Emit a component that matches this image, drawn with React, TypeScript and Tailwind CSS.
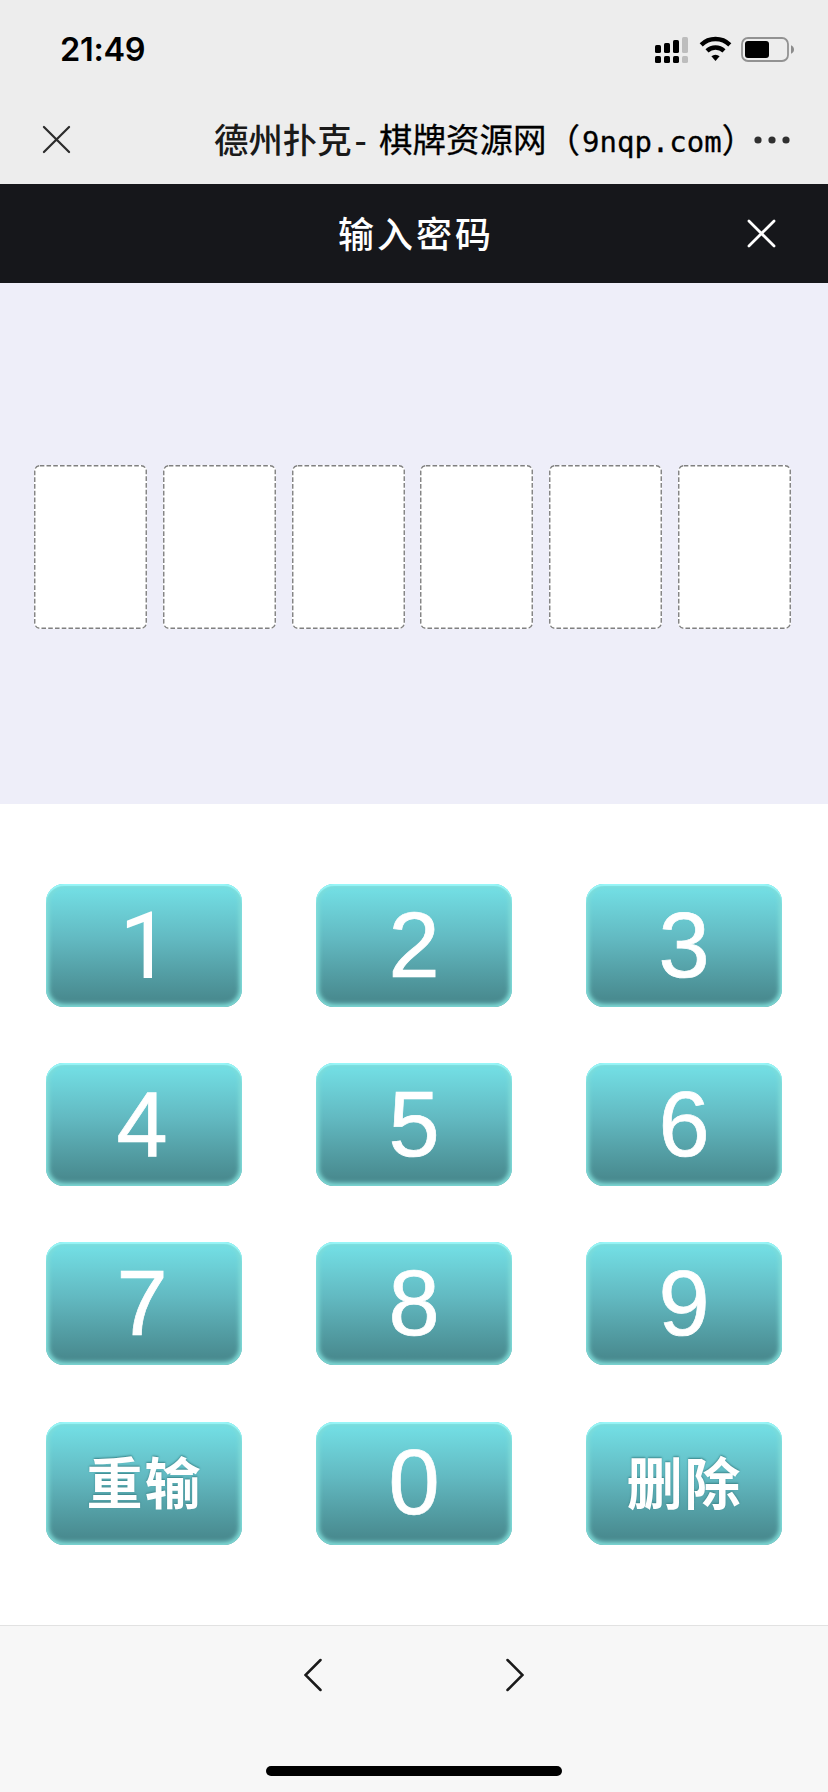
import React, { useState } from 'react';

// Touches du clavier numérique, dans l'ordre d'affichage
const keys = ['1', '2', '3', '4', '5', '6', '7', '8', '9', '重输', '0', '删除'];

const CODE_LENGTH = 6;

const StatusIcons = () => (
  <svg className="h-[30px] w-[144px]" viewBox="0 0 144 30">
    {/* Réseau double SIM */}
    <g fill="#000">
      <rect x="0" y="10" width="6" height="8" rx="1.6" />
      <rect x="9" y="8" width="6" height="10" rx="1.6" />
      <rect x="18" y="5" width="6" height="13" rx="1.6" />
      <rect x="0" y="21" width="6" height="7" rx="1.6" />
      <rect x="9" y="21" width="6" height="7" rx="1.6" />
      <rect x="18" y="21" width="6" height="7" rx="1.6" />
    </g>
    <g fill="#bdbdbd">
      <rect x="27" y="2" width="6" height="16" rx="1.6" />
      <rect x="27" y="21" width="6" height="7" rx="1.6" />
    </g>
    {/* Wi-Fi */}
    <g fill="none" stroke="#000" strokeWidth="4.4">
      <path d="M46.2 9.8a20.5 20.5 0 0 1 28.6 0" />
      <path d="M52 15.8a12.4 12.4 0 0 1 17 0" />
    </g>
    <path d="M56.4 21.3a6 6 0 0 1 8.2 0l-4.1 4.6z" fill="#000" />
    {/* Batterie */}
    <rect x="87" y="3" width="46" height="23" rx="6" fill="none" stroke="#929292" strokeWidth="1.8" />
    <rect x="90" y="6" width="24" height="17" rx="3" fill="#000" />
    <path d="M136 10.2c2 .8 3 2.3 3 4.3s-1 3.5-3 4.3z" fill="#8c8c8c" />
  </svg>
);

const CloseIcon = ({ className, strokeWidth }: { className: string; strokeWidth: number }) => (
  <svg className={className} viewBox="0 0 30 30" fill="none" stroke="currentColor" strokeWidth={strokeWidth} strokeLinecap="round">
    <path d="M2 2l26 26M28 2L2 28" />
  </svg>
);

const CodeBox = ({ value }: { value?: string }) => (
  <div className="relative flex h-[164px] flex-1 items-center justify-center rounded-md bg-white text-6xl">
    <svg className="absolute inset-0 h-full w-full" fill="none" stroke="#808080" strokeWidth="1.4">
      <rect x="0.75" y="0.75" width="111.5" height="162.5" rx="5" strokeDasharray="4.6 2.15" />
    </svg>
    {value ? '•' : ''}
  </div>
);

const KeyLabel = ({ label }: { label: string }) => {
  if (label.length > 1) {
    return (
      <span className="pb-1.5 pl-px font-['Noto_Sans_CJK_SC',sans-serif] text-[56px] leading-none font-bold tracking-[2px] [text-shadow:0_-1px_2px_#3b858a]">
        {label}
      </span>
    );
  }
  // Le 1 se dessine sans empattement
  if (label === '1') {
    return (
      <span className="pt-0.5 pl-0.5 font-[Roboto,sans-serif] text-[92px] leading-none">{label}</span>
    );
  }
  return (
    <span
      className={`pb-0.5 font-['Liberation_Sans',sans-serif] text-[92px] leading-none [-webkit-text-stroke:0.7px_white] ${
        label === '4' || label === '7' ? 'pr-1' : ''
      }`}
    >
      {label}
    </span>
  );
};

const KeyButton = ({ label, onPress }: { label: string; onPress: () => void }) => (
  <button
    onClick={onPress}
    className="flex h-[123px] items-center justify-center rounded-[18px] bg-linear-to-b from-[#72dde3] from-5% via-[#62b9c1] via-45% to-[#498b90] to-93% text-white shadow-[inset_0_2px_1px_0_#98f6f8,inset_0_0_4px_3px_#80dcd8]"
  >
    <KeyLabel label={label} />
  </button>
);

const App = () => {
  const [code, setCode] = useState('');

  const handlePress = (key: string) => {
    if (key === '重输') {
      setCode('');
    } else if (key === '删除') {
      setCode(code.slice(0, -1));
    } else if (code.length < CODE_LENGTH) {
      setCode(code + key);
    }
  };

  return (
    <div className="flex h-[1792px] w-[828px] flex-col overflow-hidden bg-white font-['Noto_Sans_CJK_SC',sans-serif]">
      {/* Barre d'état et titre de la page */}
      <header className="h-[184px] bg-[#ededed]">
        <div className="flex h-[100px] items-center justify-between pr-[29px] pl-[60px]">
          <span className="font-['Inter',sans-serif] text-[32.5px] font-semibold tracking-[-0.3px] text-black">21:49</span>
          <StatusIcons />
        </div>
        <div className="flex h-[79px] items-center pl-[42px]">
          <CloseIcon className="h-[29px] w-[29px] text-[#2c2c2c]" strokeWidth={2.3} />
          <h1 className="ml-[143px] flex items-center pb-[2px] leading-none whitespace-nowrap">
            <span className="w-[165px] text-[34.4px] font-medium text-[#1a1a1a]">
              德州扑克<span className="pl-[3px]">-</span>
            </span>
            <span className="w-[375px] text-[33.5px] text-black [-webkit-text-stroke:0.3px_black]">
              棋牌资源网（<span className="pl-0.5 font-['DejaVu_Sans_Mono',monospace] text-[29px]">9nqp.com</span>）
            </span>
          </h1>
          <svg className="h-2 w-9" viewBox="0 0 36 8" fill="#303030">
            <circle cx="4" cy="4" r="3.6" />
            <circle cx="18" cy="4" r="3.6" />
            <circle cx="32" cy="4" r="3.6" />
          </svg>
        </div>
      </header>

      <div className="grid h-[99px] grid-cols-[1fr_auto_1fr] items-center bg-[#16171b] text-white">
        <h2 className="col-start-2 pb-[3px] pl-[4px] text-[36px] leading-none font-medium tracking-[3px]">输入密码</h2>
        <CloseIcon className="mr-[52px] h-[29px] w-[29px] justify-self-end" strokeWidth={2.8} />
      </div>

      {/* Cases du code */}
      <section className="flex h-[521px] items-start gap-[15.8px] bg-[#eeeef9] pt-[182px] pr-[37px] pl-[34px]">
        {Array.from({ length: CODE_LENGTH }, (_, i) => (
          <CodeBox key={i} value={code[i]} />
        ))}
      </section>

      {/* Clavier */}
      <main className="grid flex-1 grid-cols-3 content-start gap-x-[74px] gap-y-[56.2px] px-[46px] pt-[80px]">
        {keys.map((key) => (
          <KeyButton key={key} label={key} onPress={() => handlePress(key)} />
        ))}
      </main>

      <footer className="flex h-[167px] flex-col items-center border-t border-[#e2e2e2] bg-[#f7f7f7]">
        <div className="flex h-[140px] w-[220px] items-start justify-between pt-[32px]">
          <svg className="h-[34px] w-[18px]" viewBox="0 0 18 34" fill="none" stroke="#1a1a1a" strokeWidth="2.5" strokeLinecap="round">
            <path d="M16.5 2L1.5 17l15 15" />
          </svg>
          <svg className="h-[34px] w-[18px]" viewBox="0 0 18 34" fill="none" stroke="#1a1a1a" strokeWidth="2.5" strokeLinecap="round">
            <path d="M1.5 2l15 15-15 15" />
          </svg>
        </div>
        <div className="h-[10px] w-[296px] rounded-full bg-black" />
      </footer>
    </div>
  );
};

export default App;
